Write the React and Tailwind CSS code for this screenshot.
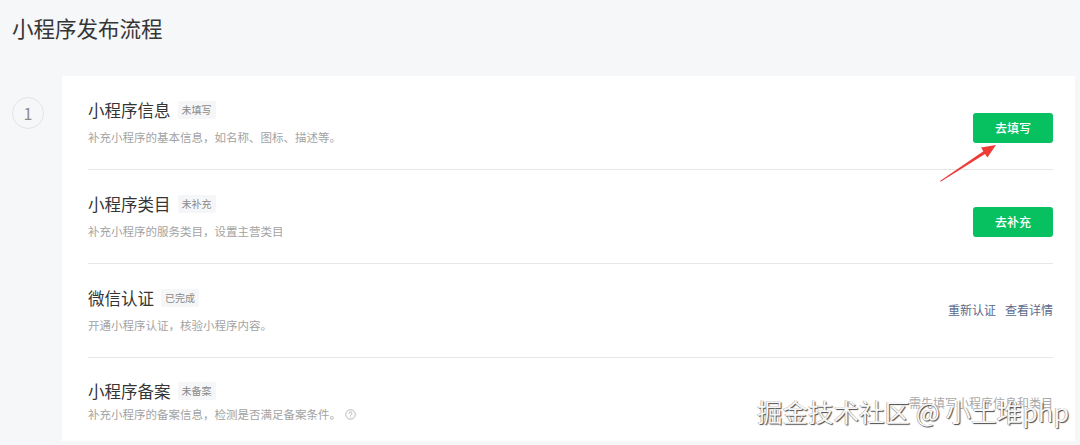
import React from "react";

const font = { fontFamily: '"Noto Sans CJK SC", "Noto Sans", sans-serif' };

function Tag({ children }) {
  return (
    <span className="ml-[7px] inline-flex h-[18px] items-center rounded-[2px] bg-[#f5f6f7] px-[4px] text-[10px] leading-none text-[#8a8a8a]">
      {children}
    </span>
  );
}

function Title({ text, tag }) {
  return (
    <div className="flex h-[20px] items-center">
      <span className="text-[16.5px] leading-[20px] text-[#353535]">{text}</span>
      <Tag>{tag}</Tag>
    </div>
  );
}

function GreenButton({ children }) {
  return (
    <button className="mt-[13px] flex h-[30px] w-[80px] items-center justify-center rounded-[3px] bg-[#07c160] text-[12px] font-medium text-white">
      {children}
    </button>
  );
}

function Help() {
  return (
    <svg width="11" height="11" viewBox="0 0 12 12" className="ml-[4px] inline-block">
      <circle cx="6" cy="6" r="5.2" fill="none" stroke="#a8a8a8" strokeWidth="0.9" />
      <path d="M4.4 4.7a1.6 1.6 0 0 1 3.2 0c0 1.1-1.6 1.1-1.6 2.2" fill="none" stroke="#a8a8a8" strokeWidth="0.9" strokeLinecap="round" />
      <circle cx="6" cy="8.7" r="0.55" fill="#a8a8a8" />
    </svg>
  );
}

export default function App() {
  return (
    <div style={font} className="relative h-[445px] w-[1080px] overflow-hidden bg-[#f6f7f9]">
      <div className="flex h-[56px] items-center pl-[12px] text-[21.5px] text-[#353535]">小程序发布流程</div>
      <div className="mt-[20px] flex">
        <div className="w-[62px] shrink-0">
          <div className="ml-[12px] mt-[21px] flex h-[32px] w-[32px] items-center justify-center rounded-full border border-[#e4e4e4] text-[16px] text-[#8a8a8a]">
            1
          </div>
        </div>
        <div className="mr-[5px] flex-1 bg-white pl-[26px] pr-[22px]">
          {/* Row 1 */}
          <div className="flex h-[94px] items-start justify-between border-b border-[#e7e7e7] pt-[24px]">
            <div>
              <Title text="小程序信息" tag="未填写" />
              <div className="mt-[8px] text-[11.5px] leading-[18px] text-[#a3a3a3]">补充小程序的基本信息，如名称、图标、描述等。</div>
            </div>
            <GreenButton>去填写</GreenButton>
          </div>
          {/* Row 2 */}
          <div className="flex h-[94px] items-start justify-between border-b border-[#e7e7e7] pt-[24px]">
            <div>
              <Title text="小程序类目" tag="未补充" />
              <div className="mt-[8px] text-[11.5px] leading-[18px] text-[#a3a3a3]">补充小程序的服务类目，设置主营类目</div>
            </div>
            <GreenButton>去补充</GreenButton>
          </div>
          {/* Row 3 */}
          <div className="flex h-[94px] items-start justify-between border-b border-[#e7e7e7] pt-[24px]">
            <div>
              <Title text="微信认证" tag="已完成" />
              <div className="mt-[8px] text-[11.5px] leading-[18px] text-[#a3a3a3]">开通小程序认证，核验小程序内容。</div>
            </div>
            <div className="mt-[13px] flex gap-[9px] text-[12px] leading-[18px] text-[#5a6a8e]">
              <span>重新认证</span>
              <span>查看详情</span>
            </div>
          </div>
          {/* Row 4 */}
          <div className="flex h-[83px] items-start justify-between pt-[23px]">
            <div>
              <Title text="小程序备案" tag="未备案" />
              <div className="mt-[4px] flex items-center text-[11.5px] leading-[18px] text-[#a3a3a3]">
                补充小程序的备案信息，检测是否满足备案条件。<Help />
              </div>
            </div>
            <div className="mt-[13px] text-[12px] leading-[18px] text-[#a8a8a8]">需先填写小程序信息和类目</div>
          </div>
        </div>
      </div>

      {/* red annotation arrow */}
      <svg className="absolute left-[930px] top-[135px]" width="75" height="55" viewBox="0 0 75 55">
        <polygon points="10,46 53.4,16.3 51,12.6 66,10 57.4,22.6 55,18.9 10.6,46.8" fill="#ee3b35" />
      </svg>

      {/* watermark */}
      <div className="absolute left-[757px] top-[395px] whitespace-nowrap text-[25.5px] leading-[32px] text-[#f7f7f7] [text-shadow:1px_1px_1px_#4a4a4a,-0.5px_-0.5px_0_#9a9a9a]">
        掘金技术社区 @ 小土堆php
      </div>
    </div>
  );
}
